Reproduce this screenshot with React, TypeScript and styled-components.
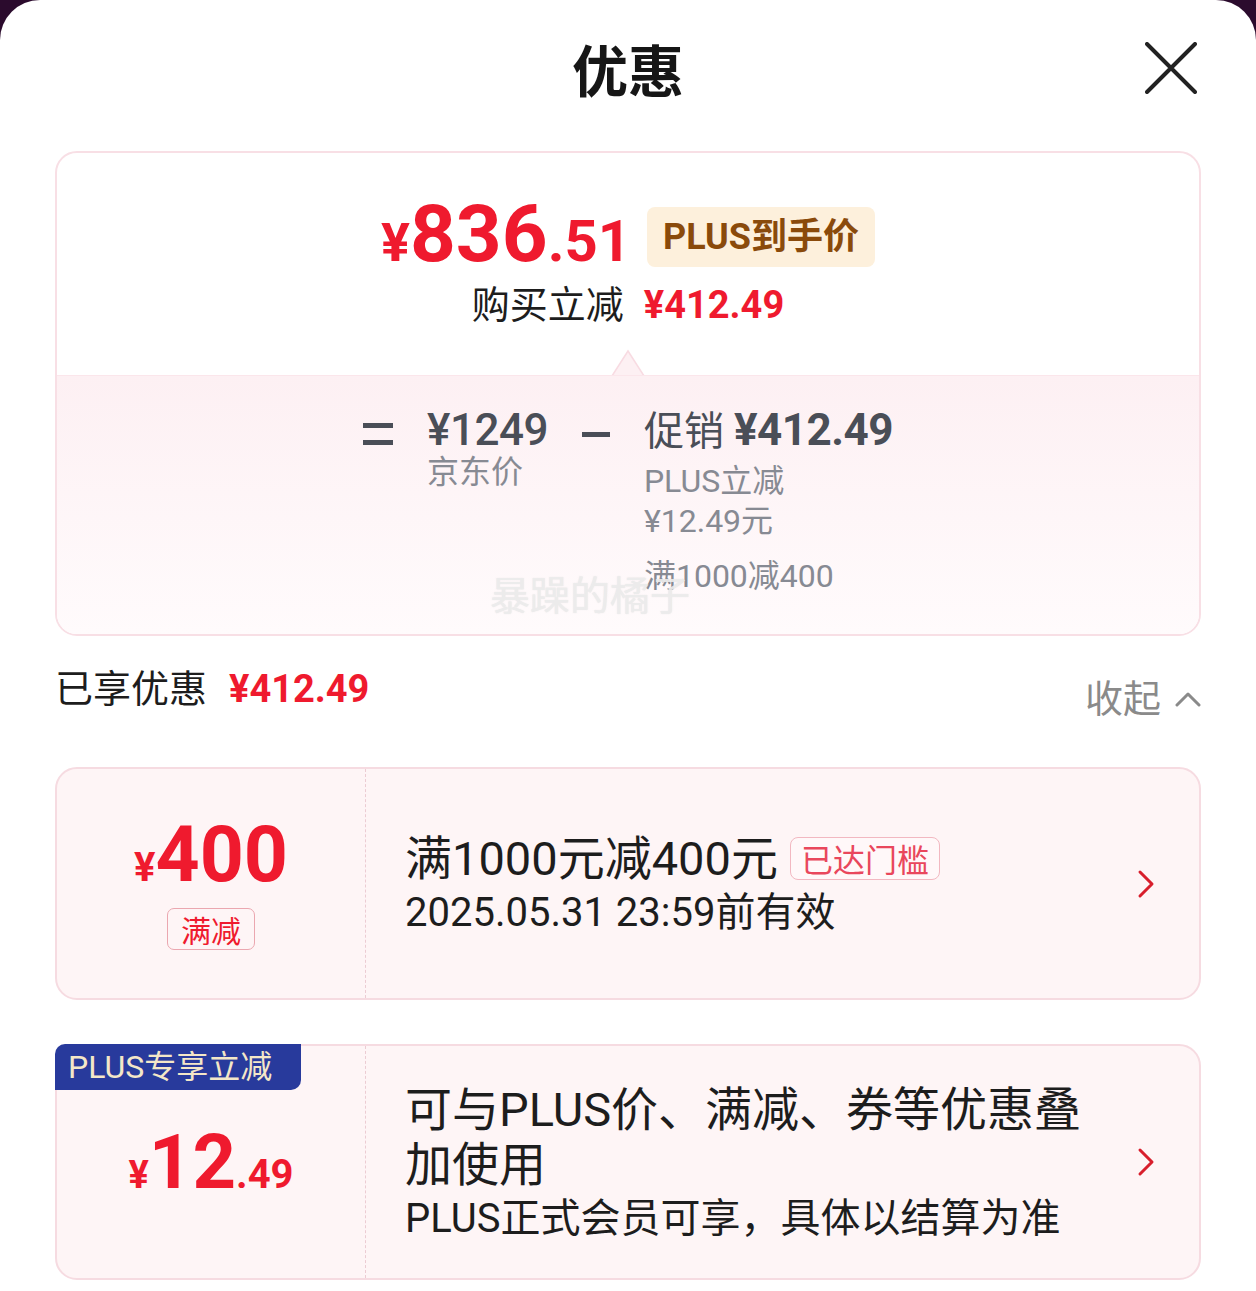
import React from "react";
import styled, { createGlobalStyle } from "styled-components";

const GlobalStyle = createGlobalStyle`
  html, body {
    margin: 0;
    padding: 0;
    background: #2b0b2d;
  }
  body {
    font-family: Roboto, "Noto Sans CJK SC", sans-serif;
    color: #1d1d1d;
  }
`;

const RED = "#ef1a2e";
const CJK = `Roboto, "Noto Sans CJK SC", sans-serif`;

const Sheet = styled.div`
  width: 1256px;
  min-height: 1291px;
  box-sizing: border-box;
  background: #fff;
  border-radius: 40px 40px 0 0;
  padding: 0 55px 11px;
`;

const Header = styled.header`
  height: 136px;
  display: grid;
  grid-template-columns: 1fr auto 1fr;
  align-items: center;
`;

const Title = styled.h1`
  grid-column: 2;
  margin: 0;
  font: 700 56px/1 "Noto Sans CJK SC", sans-serif;
  color: #161616;
`;

const CloseButton = styled.button`
  justify-self: end;
  margin-right: 4px;
  width: 52px;
  height: 52px;
  padding: 0;
  border: 0;
  background: none;
  display: flex;
`;

const PriceCard = styled.section`
  margin-top: 15px;
  border: 2px solid #f8dfe5;
  border-radius: 22px;
  overflow: hidden;
`;

const PriceTop = styled.div`
  position: relative;
  padding: 41px 0 46px;
  display: flex;
  flex-direction: column;
  align-items: center;
`;

const PriceRow = styled.div`
  display: flex;
  align-items: center;
  gap: 16px;
`;

const BigPrice = styled.div<{ $size: number; $line: number }>`
  color: ${RED};
  font-family: Roboto, sans-serif;
  font-weight: 700;
  font-size: ${(p) => p.$size}px;
  line-height: ${(p) => p.$line}px;
  white-space: nowrap;
`;

const PriceUnit = styled.span<{ $size: number }>`
  font-size: ${(p) => p.$size}px;
  line-height: 1;
`;

const PlusBadge = styled.div`
  height: 60px;
  padding: 0 16px;
  border-radius: 8px;
  background: #fdf0dc;
  color: #8a4a0b;
  font: 700 36px/60px ${CJK};
  margin-top: 6px;
`;

const SubLine = styled.div`
  display: flex;
  align-items: baseline;
  gap: 20px;
  margin-top: 7px;
  font: 400 38px/48px ${CJK};
  color: #1d1d1d;
`;

const RedAmount = styled.span<{ $size?: number }>`
  color: ${RED};
  font-family: Roboto, sans-serif;
  font-weight: 700;
  font-size: ${(p) => p.$size ?? 38}px;
`;

const Pointer = styled.svg`
  position: absolute;
  left: 50%;
  bottom: -1px;
  transform: translateX(-50%);
`;

const PriceBreak = styled.div`
  position: relative;
  background: linear-gradient(#fdf0f3, #fffbfc);
  border-top: 1px solid #fbe6eb;
  padding: 30px 0 38px;
  display: flex;
  justify-content: center;
  gap: 34px;
`;

const Operator = styled.span<{ $kind: "eq" | "minus" }>`
  align-self: flex-start;
  box-sizing: border-box;
  width: ${(p) => (p.$kind === "eq" ? 30 : 28)}px;
  height: ${(p) => (p.$kind === "eq" ? 22 : 5)}px;
  margin-top: ${(p) => (p.$kind === "eq" ? 17 : 26)}px;
  border-top: 5px solid #4a4e57;
  border-bottom: ${(p) => (p.$kind === "eq" ? "5px solid #4a4e57" : "none")};
`;

const BreakColumn = styled.div`
  display: flex;
  flex-direction: column;
  align-items: flex-start;
`;

const BreakAmount = styled.div`
  display: flex;
  align-items: baseline;
  gap: 10px;
  color: #4a4e57;
  font: 400 40px/48px ${CJK};
  white-space: nowrap;
`;

const BreakNumber = styled.span<{ $weight: number }>`
  font-family: Roboto, sans-serif;
  font-size: 44px;
  font-weight: ${(p) => p.$weight};
  letter-spacing: -0.5px;
`;

const BreakLabel = styled.div<{ $gap?: number }>`
  margin-top: ${(p) => p.$gap ?? 0}px;
  color: #878a93;
  font: 400 32px/40px ${CJK};
  white-space: nowrap;
`;

const Watermark = styled.div`
  position: absolute;
  left: 433px;
  top: 197px;
  font: 400 40px/40px "Noto Sans CJK SC", sans-serif;
  color: rgba(238, 238, 238, 0.85);
  text-shadow: 0 0 1px rgba(200, 200, 200, 0.5);
  pointer-events: none;
`;

const SummaryRow = styled.div`
  margin-top: 29px;
  display: flex;
  justify-content: space-between;
  align-items: flex-start;
`;

const SummaryText = styled.div`
  display: flex;
  align-items: baseline;
  gap: 22px;
  font: 400 38px/48px ${CJK};
  color: #1d1d1d;
`;

const CollapseToggle = styled.button`
  margin-top: 10px;
  padding: 0;
  border: 0;
  background: none;
  display: flex;
  align-items: center;
  gap: 14px;
  font: 400 38px/48px ${CJK};
  color: #8a8a8a;
`;

const CouponList = styled.div`
  margin-top: 44px;
  display: flex;
  flex-direction: column;
  gap: 44px;
`;

const Coupon = styled.div<{ $height: number }>`
  position: relative;
  box-sizing: border-box;
  min-height: ${(p) => p.$height}px;
  display: grid;
  grid-template-columns: 309px 1fr auto;
  background: #fef5f6;
  border: 2px solid #f6dbe1;
  border-radius: 22px;
`;

const CouponValue = styled.div`
  display: flex;
  flex-direction: column;
  align-items: center;
  justify-content: center;
  border-right: 1.5px dashed #ecccd3;
`;

const TypeTag = styled.span`
  margin-top: 14px;
  padding: 0 13px;
  border: 1px solid #eba7b0;
  border-radius: 7px;
  color: ${RED};
  font: 400 30px/40px "Noto Sans CJK SC", sans-serif;
`;

const CouponInfo = styled.div`
  padding-left: 39px;
  display: flex;
  flex-direction: column;
  justify-content: center;
`;

const CouponTitle = styled.div`
  max-width: 690px;
  display: flex;
  flex-wrap: wrap;
  align-items: center;
  font: 400 47px/55px ${CJK};
  color: #1d1d1d;
`;

const ReachedTag = styled.span`
  margin-left: 12px;
  padding: 0 10px;
  border: 1.5px solid #f2b8c1;
  border-radius: 8px;
  background: #fff8f9;
  color: #e9475c;
  font: 400 32px/41px "Noto Sans CJK SC", sans-serif;
`;

const CouponNote = styled.div`
  margin-top: 3px;
  font: 400 40px/48px ${CJK};
  color: #1d1d1d;
`;

const Arrow = styled.div`
  padding: 0 44px 0 20px;
  display: flex;
  align-items: center;
`;

const PlusRibbon = styled.div`
  position: absolute;
  left: -2px;
  top: -2px;
  height: 46px;
  padding: 0 29px 0 13px;
  border-radius: 10px 0 10px 0;
  background: #283a9c;
  color: #f4e7c8;
  font: 400 32px/46px ${CJK};
`;

const ChevronRight = () => (
  <svg width="18" height="30" viewBox="0 0 18 30">
    <polyline points="3,3 15,15 3,27" fill="none" stroke="#d81e2c" strokeWidth="3" strokeLinecap="round" strokeLinejoin="round" />
  </svg>
);

const App: React.FC = () => {
  return (
    <>
      <GlobalStyle />
      <Sheet>
        <Header>
          <Title>优惠</Title>
          <CloseButton aria-label="关闭">
            <svg width="52" height="52" viewBox="0 0 52 52">
              <path d="M2 2 L50 50 M50 2 L2 50" stroke="#222" strokeWidth="4" strokeLinecap="round" />
            </svg>
          </CloseButton>
        </Header>

        <PriceCard>
          <PriceTop>
            <PriceRow>
              <BigPrice $size={80} $line={80}>
                <PriceUnit $size={54}>¥</PriceUnit>
                <PriceUnit $size={80}>836</PriceUnit>
                <PriceUnit $size={58}>.51</PriceUnit>
              </BigPrice>
              <PlusBadge>PLUS到手价</PlusBadge>
            </PriceRow>
            <SubLine>
              <span>购买立减</span>
              <RedAmount>¥412.49</RedAmount>
            </SubLine>
            <Pointer width="34" height="27" viewBox="0 0 34 27">
              <path d="M1 27 L17 2 L33 27" fill="#fdf0f3" stroke="#f8dbe2" strokeWidth="1.5" />
            </Pointer>
          </PriceTop>

          <PriceBreak>
            <Operator $kind="eq" />
            <BreakColumn>
              <BreakAmount>
                <BreakNumber $weight={500}>¥1249</BreakNumber>
              </BreakAmount>
              <BreakLabel $gap={-2}>京东价</BreakLabel>
            </BreakColumn>
            <Operator $kind="minus" />
            <BreakColumn>
              <BreakAmount>
                <span>促销</span>
                <BreakNumber $weight={700}>¥412.49</BreakNumber>
              </BreakAmount>
              <BreakLabel $gap={5}>PLUS立减</BreakLabel>
              <BreakLabel>¥12.49元</BreakLabel>
              <BreakLabel $gap={15}>满1000减400</BreakLabel>
            </BreakColumn>
            <Watermark>暴躁的橘子</Watermark>
          </PriceBreak>
        </PriceCard>

        <SummaryRow>
          <SummaryText>
            <span>已享优惠</span>
            <RedAmount>¥412.49</RedAmount>
          </SummaryText>
          <CollapseToggle>
            收起
            <svg width="26" height="16" viewBox="0 0 26 16">
              <polyline points="2,14 13,3 24,14" fill="none" stroke="#8a8a8a" strokeWidth="3" strokeLinecap="round" strokeLinejoin="round" />
            </svg>
          </CollapseToggle>
        </SummaryRow>

        <CouponList>
          <Coupon $height={233}>
            <CouponValue>
              <BigPrice $size={77} $line={76}>
                <PriceUnit $size={40}>¥</PriceUnit>
                <PriceUnit $size={77}>400</PriceUnit>
              </BigPrice>
              <TypeTag>满减</TypeTag>
            </CouponValue>
            <CouponInfo>
              <CouponTitle>
                满1000元减400元
                <ReachedTag>已达门槛</ReachedTag>
              </CouponTitle>
              <CouponNote>2025.05.31 23:59前有效</CouponNote>
            </CouponInfo>
            <Arrow>
              <ChevronRight />
            </Arrow>
          </Coupon>

          <Coupon $height={236}>
            <PlusRibbon>PLUS专享立减</PlusRibbon>
            <CouponValue>
              <BigPrice $size={76} $line={76}>
                <PriceUnit $size={38}>¥</PriceUnit>
                <PriceUnit $size={76}>12</PriceUnit>
                <PriceUnit $size={40}>.49</PriceUnit>
              </BigPrice>
            </CouponValue>
            <CouponInfo>
              <CouponTitle>可与PLUS价、满减、券等优惠叠加使用</CouponTitle>
              <CouponNote>PLUS正式会员可享，具体以结算为准</CouponNote>
            </CouponInfo>
            <Arrow>
              <ChevronRight />
            </Arrow>
          </Coupon>
        </CouponList>
      </Sheet>
    </>
  );
};

export default App;
